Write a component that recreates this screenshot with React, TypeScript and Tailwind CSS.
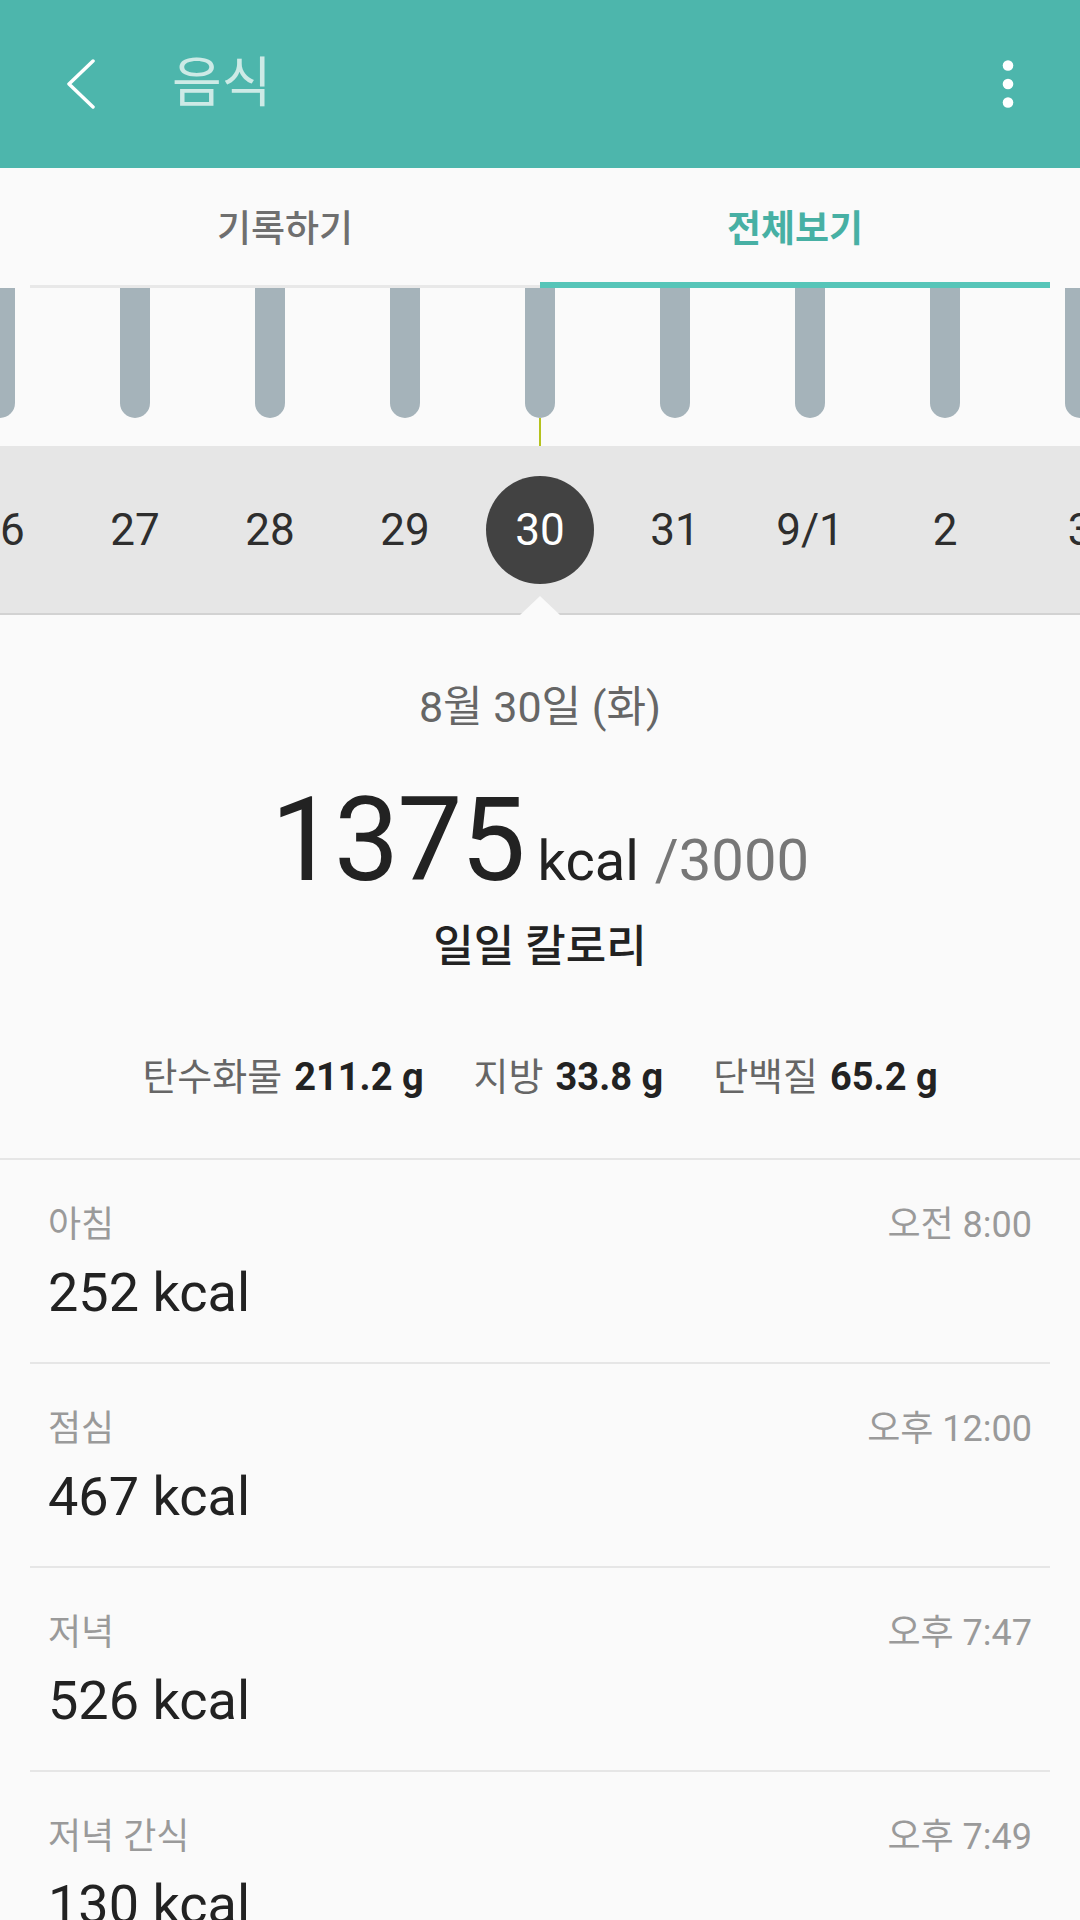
import React from "react";

const days = ["26", "27", "28", "29", "30", "31", "9/1", "2", "3"];

const macros = [
  ["탄수화물", "211.2 g"],
  ["지방", "33.8 g"],
  ["단백질", "65.2 g"],
];

const meals = [
  { name: "아침", time: "오전 8:00", kcal: 252 },
  { name: "점심", time: "오후 12:00", kcal: 467 },
  { name: "저녁", time: "오후 7:47", kcal: 526 },
  { name: "저녁 간식", time: "오후 7:49", kcal: 130 },
];

const font = { fontFamily: 'Roboto, "Noto Sans CJK KR", sans-serif' };

const Header = () => (
  <div className="h-[168px] bg-[#4db6ac] flex items-center">
    <svg className="ml-[66px] w-[30px] h-[50px]" viewBox="0 0 30 50">
      <path d="M27 2 L3 25 L27 48" fill="none" stroke="#ffffff" strokeWidth="3.5" strokeLinecap="round" strokeLinejoin="round" />
    </svg>
    <div className="ml-[76px] text-[54px] leading-none text-[#cdeae6]">음식</div>
    <svg className="ml-auto mr-[66px] w-[12px] h-[50px]" viewBox="0 0 12 50">
      <circle cx="6" cy="6.5" r="5.3" fill="#ffffff" />
      <circle cx="6" cy="25" r="5.3" fill="#ffffff" />
      <circle cx="6" cy="43.5" r="5.3" fill="#ffffff" />
    </svg>
  </div>
);

const Tabs = () => (
  <div className="h-[120px] flex px-[30px]">
    <div className="flex-1 flex flex-col">
      <div className="flex-1 flex items-center justify-center pt-[10px] text-[37px] font-medium text-[#6f6f6f]">
        기록하기
      </div>
      <div className="h-[6px] flex items-end">
        <div className="w-full h-[3px] bg-[#e8e8e8]" />
      </div>
    </div>
    <div className="flex-1 flex flex-col">
      <div className="flex-1 flex items-center justify-center pt-[10px] text-[37px] font-bold text-[#47b0a4]">
        전체보기
      </div>
      <div className="h-[6px] bg-[#56c5b8]" />
    </div>
  </div>
);

const Bars = () => (
  <div className="h-[158px] overflow-hidden">
    <div className="flex -ml-[67.5px]">
      {days.map((d, i) => (
        <div key={d} className="w-[135px] shrink-0 flex flex-col items-center">
          <div className="w-[30px] h-[130px] rounded-b-[15px] bg-[#a5b3ba]" />
          {i === 4 && <div className="w-[2px] h-[28px] bg-[#b5c21e]" />}
        </div>
      ))}
    </div>
  </div>
);

const DateStrip = () => (
  <div className="relative h-[169px] bg-[#e6e6e6] border-b-2 border-[#d2d2d2]">
    <div className="h-full overflow-hidden">
      <div className="flex h-full items-center -ml-[67.5px]">
        {days.map((d, i) => (
          <div key={d} className="w-[135px] shrink-0 flex items-center justify-center">
            {i === 4 ? (
              <div className="w-[108px] h-[108px] rounded-full bg-[#424242] flex items-center justify-center text-[44px] text-white">
                {d}
              </div>
            ) : (
              <div className="text-[44px] text-[#2e2e2e]">{d}</div>
            )}
          </div>
        ))}
      </div>
    </div>
    <svg className="absolute left-1/2 -translate-x-1/2 -bottom-[2px] w-[40px] h-[20px]" viewBox="0 0 40 20">
      <polygon points="0,20 20,1 40,20" fill="#fafafa" />
    </svg>
  </div>
);

const Summary = () => (
  <div className="border-b-2 border-[#e6e6e6] pb-[56px] flex flex-col items-center">
    <div className="mt-[66px] text-[43px] leading-[52px] text-[#666666]">8월 30일 (화)</div>
    <div className="mt-[49px] flex items-baseline leading-none">
      <span className="text-[116px] tracking-[-2px] text-[#222222]">1375</span>
      <span className="ml-[14px] text-[56px] text-[#222222]">kcal</span>
      <span className="ml-[16px] text-[58px] text-[#777777]">/3000</span>
    </div>
    <div className="mt-[22px] text-[44px] leading-[54px] font-medium text-[#222222]">일일 칼로리</div>
    <div className="mt-[78px] flex gap-[50px] text-[38px] leading-[50px]">
      {macros.map(([k, v]) => (
        <div key={k} className="flex gap-[12px]">
          <span className="text-[#666666]">{k}</span>
          <span className="font-bold text-[#222222]">{v}</span>
        </div>
      ))}
    </div>
  </div>
);

const MealRow = ({ name, time, kcal }: { name: string; time: string; kcal: number }) => (
  <div className="mx-[30px] h-[204px] border-b-2 border-[#e6e6e6] px-[18px] pt-[42px]">
    <div className="flex justify-between text-[36px] leading-[46px] text-[#9a9a9a]">
      <span>{name}</span>
      <span>{time}</span>
    </div>
    <div className="mt-[15px] text-[54px] leading-[60px] text-[#222222]">{kcal} kcal</div>
  </div>
);

export default function App() {
  return (
    <div className="w-[1080px] h-[1920px] overflow-hidden bg-[#fafafa]" style={font}>
      <Header />
      <Tabs />
      <Bars />
      <DateStrip />
      <Summary />
      {meals.map((m) => (
        <MealRow key={m.name} {...m} />
      ))}
    </div>
  );
}
